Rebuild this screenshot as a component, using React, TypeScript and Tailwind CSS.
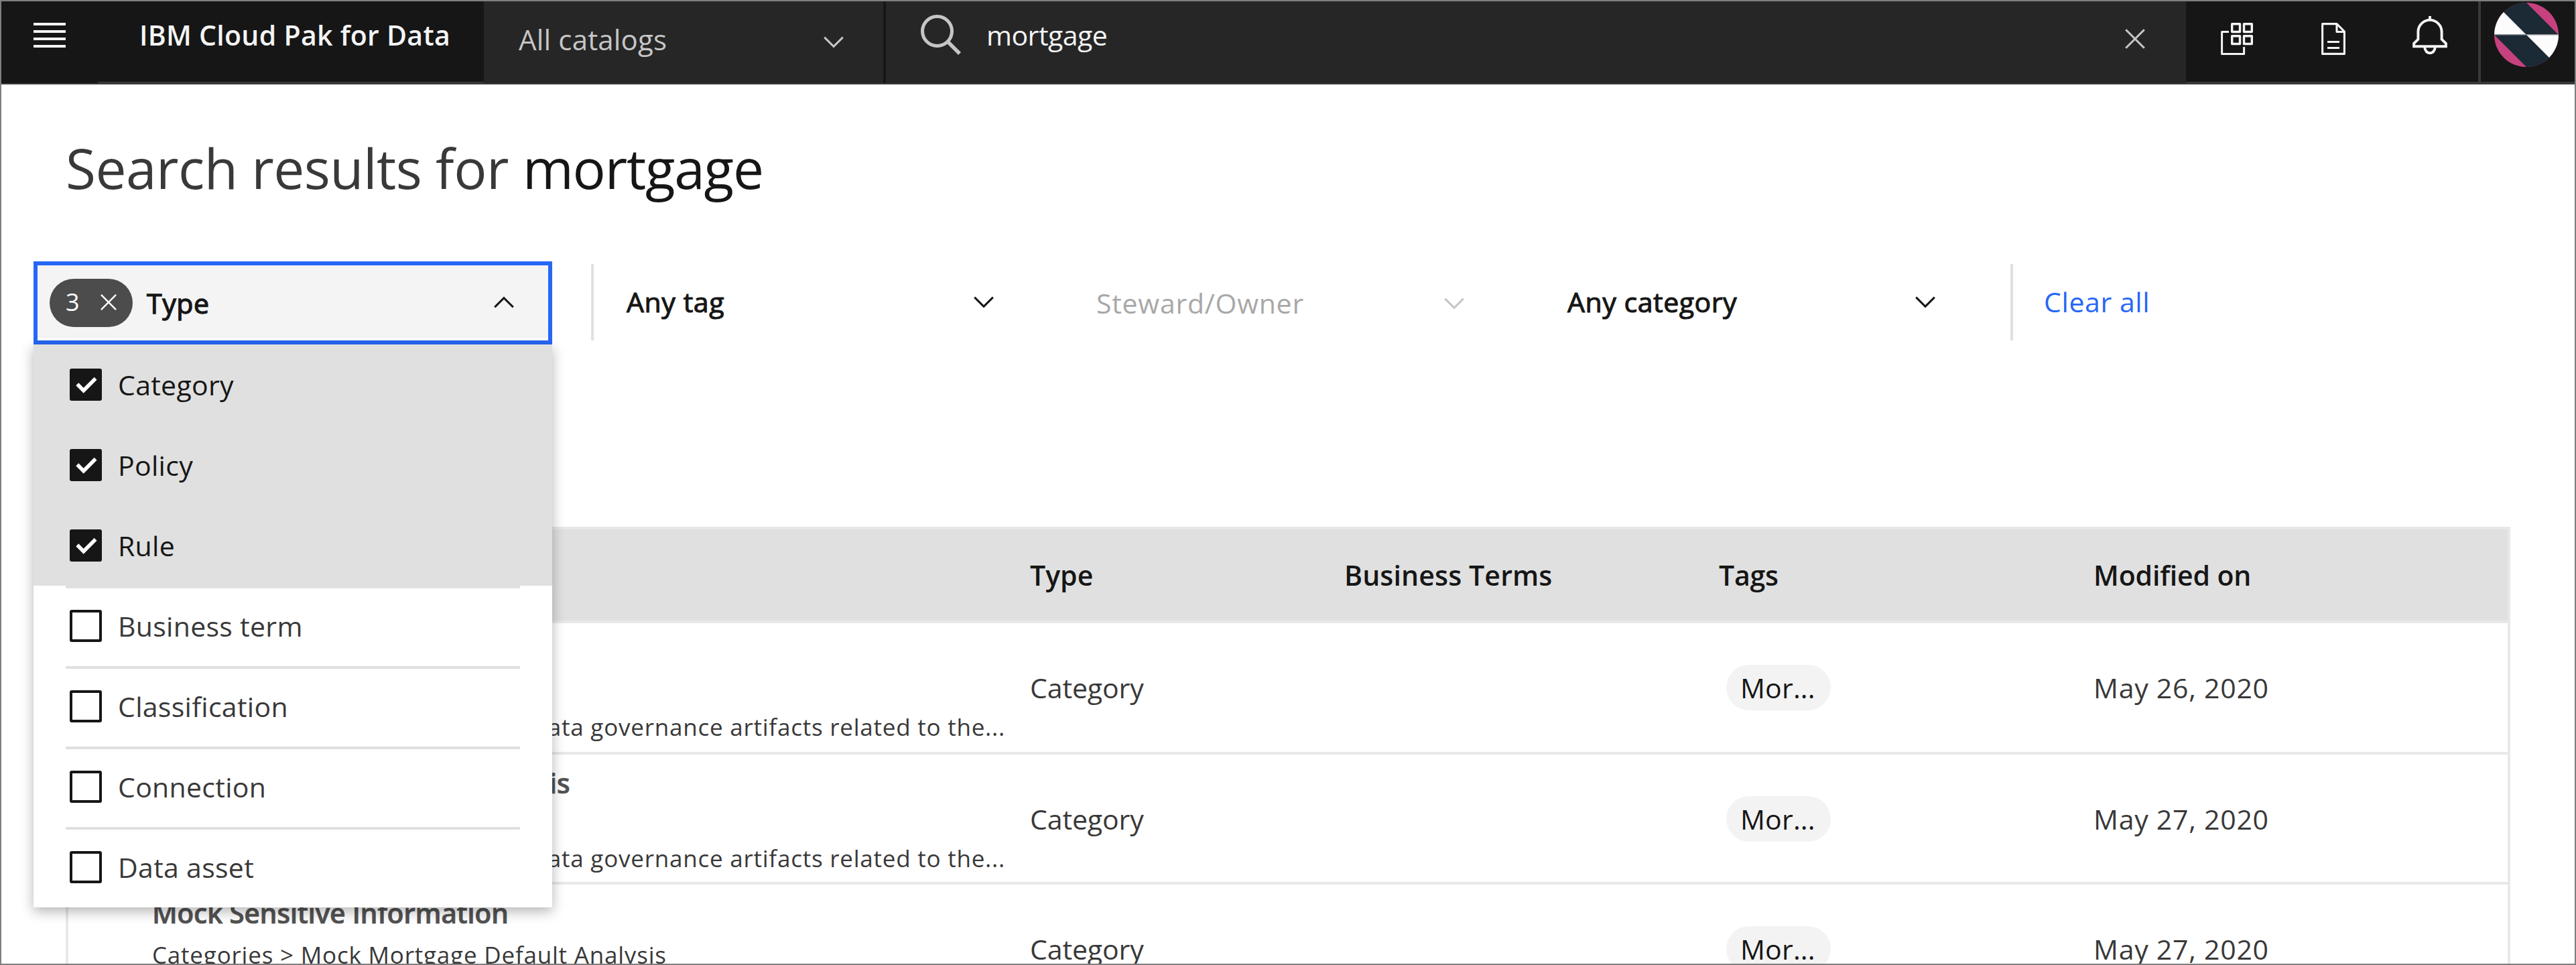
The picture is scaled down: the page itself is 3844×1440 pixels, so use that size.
import React from "react";

type IconProps = { className?: string };

function Chevron({ className = "" }: IconProps) {
  return (
    <svg viewBox="0 0 30 18" className={`h-[18px] w-[30px] shrink-0 ${className}`} fill="none" stroke="currentColor" strokeWidth="3">
      <path d="M1.2 1.6 15 15.4 28.8 1.6" />
    </svg>
  );
}

function Close({ className = "" }: IconProps) {
  return (
    <svg viewBox="0 0 30 30" className={`shrink-0 ${className}`} fill="none" stroke="currentColor" strokeWidth="3">
      <path d="M1.2 1.2 28.8 28.8M28.8 1.2 1.2 28.8" />
    </svg>
  );
}

function SearchIcon() {
  return (
    <svg viewBox="0 0 60 60" className="mt-5 h-[60px] w-[60px] shrink-0 text-[#c6c6c6]" fill="none" stroke="currentColor">
      <circle cx="24.5" cy="24.5" r="22" strokeWidth="5" />
      <path d="M40.5 40.5 58 58" strokeWidth="5.4" />
    </svg>
  );
}

function AppsIcon() {
  return (
    <svg viewBox="0 0 48 48" className="h-12 w-12" fill="none" stroke="currentColor" strokeWidth="3.4" strokeLinejoin="round">
      <rect x="16.7" y="1.7" width="11.8" height="11.8" />
      <rect x="34.5" y="1.7" width="11.8" height="11.8" />
      <rect x="16.7" y="19.7" width="11.8" height="11.8" />
      <rect x="34.5" y="19.7" width="11.8" height="11.8" />
      <path d="M12 13.5H1.6v33h33V36" strokeWidth="3" />
    </svg>
  );
}

function DocumentIcon() {
  return (
    <svg viewBox="0 0 36 48" className="h-12 w-9" fill="none" stroke="currentColor" strokeWidth="3.1" strokeLinejoin="round">
      <path d="M1.6 1.6h21.4l11.4 11.4v33.4H1.6z" />
      <path d="M23 1.6v11.9h11.4M9 28.5h18M9 37.5h18" />
    </svg>
  );
}

function BellIcon() {
  return (
    <svg viewBox="0 0 52 58" className="h-[58px] w-[52px]" fill="none" stroke="currentColor" strokeWidth="3.9">
      <path d="M26 0v6" />
      <path d="M8.4 34.6V23.5a17.6 17.6 0 0 1 35.2 0v11.1l6.3 6.2v4.4H2.1v-4.4z" />
      <path d="M18.3 46.5a7.7 8.6 0 0 0 15.4 0" />
    </svg>
  );
}

function Avatar() {
  return (
    <svg viewBox="0 0 96 96" className="ml-5 mt-0.5 h-24 w-24">
      <clipPath id="avatar">
        <circle cx="48" cy="48" r="48" />
      </clipPath>
      <g clipPath="url(#avatar)">
        <rect width="96" height="96" fill="#c7417f" />
        <path d="M-48 0H48L96 48 144 96H48L0 48z" fill="#1b2a34" />
        <path d="M0 48V0L48 48zM96 48v48L48 48z" fill="#fcfcfc" />
        <path d="M0 47.8h96" stroke="#8d9296" strokeWidth="1.6" />
      </g>
    </svg>
  );
}

function Header() {
  return (
    <header className="flex h-[124px] border-b-2 border-[#393939] bg-[#262626]">
      <div className="flex w-36 flex-col gap-[7px] bg-[#161616] pl-12 pt-8 text-[#f4f4f4]">
        {[0, 1, 2, 3].map((i) => (
          <span key={i} className="h-1 w-12 bg-[#f4f4f4]" />
        ))}
      </div>
      <div className="w-[576px] border-b-2 border-[#393939] bg-[#161616] pl-[62px] text-[41px] font-semibold leading-[100px] tracking-[0.28px] text-[#f4f4f4]">
        IBM Cloud Pak for Data
      </div>
      <div className="flex w-[600px] justify-between border-r-4 border-[#161616] pl-[52px] pr-[59px] text-[#c6c6c6]">
        <span className="text-[42px] leading-[113px] tracking-[0.17px]">All catalogs</span>
        <Chevron className="mt-[52px]" />
      </div>
      <div className="flex flex-1 pl-[52px] pr-[61px]">
        <SearchIcon />
        <span className="ml-[38px] flex-1 text-[41px] leading-[100px] tracking-[-0.5px] text-[#f4f4f4]">mortgage</span>
        <Close className="mt-[41px] h-[30px] w-[30px] text-[#c6c6c6]" />
      </div>
      <div className="flex w-[440px] border-b-2 border-r-4 border-[#393939] bg-[#161616] pl-[52px] text-[#f4f4f4]">
        <div className="mt-8 w-[150px]"><AppsIcon /></div>
        <div className="mt-8 w-[136px]"><DocumentIcon /></div>
        <div className="mt-[22px]"><BellIcon /></div>
      </div>
      <div className="w-[140px] border-b-2 border-[#393939] bg-[#161616]">
        <Avatar />
      </div>
    </header>
  );
}

const selected = ["Category", "Policy", "Rule"];
const unselected = ["Business term", "Classification", "Connection", "Data asset"];

function TypeMenu() {
  return (
    <div className="absolute left-0 top-full z-10 w-[774px] bg-white shadow-[0_6px_18px_rgba(0,0,0,0.3)]">
      {selected.map((label) => (
        <div key={label} className="flex h-[120px] items-center gap-6 bg-[#e0e0e0] px-[54px]">
          <span className="h-12 w-12 rounded-[3px] bg-[#161616]">
            <svg viewBox="0 0 48 48" className="h-12 w-12" fill="#fff">
              <path d="M9.3 25.3 13.3 21.3 20.7 28.7 36.7 12.7 40.5 16.7 20.7 36.7z" />
            </svg>
          </span>
          <span className="text-[41px] leading-[120px] tracking-[0.3px] text-[#161616]">{label}</span>
        </div>
      ))}
      {unselected.map((label) => (
        <div key={label} className="mx-12 flex h-[120px] gap-6 border-t-4 border-[#e0e0e0] px-1.5">
          <span className="mt-8 h-12 w-12 rounded-[3px] border-4 border-[#161616]" />
          <span className="text-[41px] leading-[112px] tracking-[0.3px] text-[#393939]">{label}</span>
        </div>
      ))}
    </div>
  );
}

function Filters() {
  return (
    <div className="ml-12 mt-20 flex h-[124px] text-[41px] text-[#161616]">
      <div className="relative h-[124px] w-[774px] border-[6px] border-[#2667f6] bg-white">
        <div className="flex h-[108px] bg-[#f4f4f4] pl-[18px] pr-[51px]">
          <div className="mt-5 flex h-[72px] w-[124px] rounded-full bg-[#4c4c4c] pl-6 text-white">
            <span className="w-[52px] text-[36px] leading-[70px]">3</span>
            <Close className="mt-[23px] h-6 w-6" />
          </div>
          <span className="ml-[21px] flex-1 leading-[112px] tracking-[0.6px] [-webkit-text-stroke:1.3px]">Type</span>
          <Chevron className="mt-[46px] rotate-180" />
        </div>
        <div className="absolute -left-1.5 top-[112px] h-1.5 w-[774px]"><TypeMenu /></div>
      </div>
      <span className="ml-[58px] mt-1 h-[114px] w-1 bg-[#e0e0e0]" />
      <div className="ml-[49px] mt-1 flex w-[548px] justify-between">
        <span className="leading-[112px] tracking-[0.6px] [-webkit-text-stroke:1.1px]">Any tag</span>
        <Chevron className="mt-12" />
      </div>
      <div className="ml-[153px] mt-1 flex w-[549px] justify-between text-[#a8a8a8]">
        <span className="leading-[116px] tracking-[0.75px]">Steward/Owner</span>
        <Chevron className="mt-[50px] text-[#c6c6c6]" />
      </div>
      <div className="ml-[154px] mt-1 flex w-[549px] justify-between">
        <span className="leading-[112px] tracking-[0.55px] [-webkit-text-stroke:1.1px]">Any category</span>
        <Chevron className="mt-12" />
      </div>
      <span className="ml-[112px] mt-1 h-[114px] w-1 bg-[#e0e0e0]" />
      <span className="ml-[46px] mt-1 leading-[112px] tracking-[0.6px] text-[#2667f6]">Clear all</span>
    </div>
  );
}

const rows = [
  {
    name: "Mock Mortgage",
    path: "Categories",
    desc: "Category for mock mortgage data governance artifacts related to the...",
    date: "May 26, 2020",
    height: "h-48",
  },
  {
    name: "Mock Mortgage Default Analysis",
    path: "Categories > Mock Mortgage",
    desc: "Category for mock mortgage data governance artifacts related to the...",
    date: "May 27, 2020",
    height: "h-[190px]",
  },
  {
    name: "Mock Sensitive Information",
    path: "Categories > Mock Mortgage Default Analysis",
    desc: "",
    date: "May 27, 2020",
    height: "h-[190px]",
  },
];

function Results() {
  return (
    <div className="ml-24 mt-[272px] w-[3648px] border-4 border-[#e8e8e8] text-[41px] text-[#393939]">
      <div className="grid h-[140px] grid-cols-[1434px_470px_559px_559px_1fr] border-b-4 border-[#e8e8e8] bg-[#e0e0e0] font-semibold leading-[136px] text-[#161616]">
        <span />
        <span className="pl-px">Type</span>
        <span className="tracking-[0.15px]">Business Terms</span>
        <span className="tracking-[-0.22px]">Tags</span>
        <span className="tracking-[-0.15px]">Modified on</span>
      </div>
      {rows.map((row, i) => (
        <div key={i} className="border-b-4 border-[#e8e8e8]">
          <div className={`grid ${row.height} grid-cols-[1434px_470px_559px_559px_1fr]`}>
            <div className="flex w-[1398px] flex-col whitespace-nowrap pl-[125px] pt-0.5 text-[35px]">
              <span className="h-20 text-[41px] font-semibold leading-[80px] tracking-[-0.42px] text-[#525252] [-webkit-text-stroke:0.6px]">
                {row.name}
              </span>
              <span className="h-[46px] leading-[46px] tracking-[0.8px]">{row.path}</span>
              <span className="h-[54px] text-right leading-[54px] tracking-[0.77px]">{row.desc}</span>
            </div>
            <span className="pl-px leading-[192px] tracking-[-0.1px]">Category</span>
            <span />
            <div className="flex items-center">
              <span className="ml-[11px] h-[68px] w-[156px] rounded-full bg-[#f3f3f3] pl-[21px] leading-[68px] tracking-[0.2px] text-[#161616]">
                Mor...
              </span>
            </div>
            <span className="leading-[192px] tracking-[0.75px]">{row.date}</span>
          </div>
        </div>
      ))}
    </div>
  );
}

export default function App() {
  return (
    <div className="h-[1440px] w-[3844px] overflow-hidden border-2 border-[#7f7f7f] bg-white font-['Open_Sans',sans-serif]">
      <Header />
      <h1 className="ml-24 mt-16 flex h-[120px] gap-[21px] text-[82px] leading-[120px] text-[#393939]">
        <span className="tracking-[-0.54px]">Search results for</span>
        <span className="tracking-[-1.23px] text-[#161616]">mortgage</span>
      </h1>
      <Filters />
      <Results />
    </div>
  );
}
